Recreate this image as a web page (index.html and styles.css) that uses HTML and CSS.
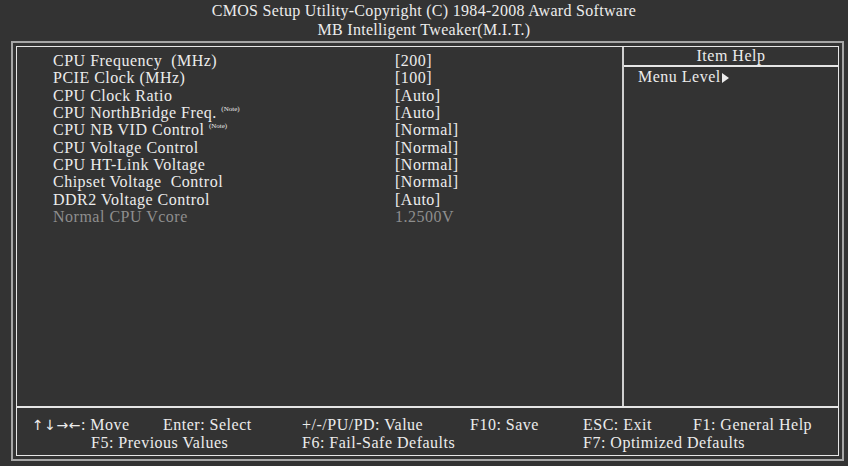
FILE: index.html
```
<!DOCTYPE html>
<html lang="en">
<head>
  <meta charset="UTF-8">
  <title>MB Intelligent Tweaker(M.I.T.)</title>
  <link rel="stylesheet" href="styles.css">
</head>
<body>
  <div class="title">
    <div>CMOS Setup Utility-Copyright (C) 1984-2008 Award Software</div>
    <div>MB Intelligent Tweaker(M.I.T.)</div>
  </div>

  <div class="outer">
    <div class="inner">
      <div class="main">
        <div class="items">
          <div class="row"><span class="name">CPU Frequency&nbsp; (MHz)</span><span class="value">[200]</span></div>
          <div class="row"><span class="name">PCIE Clock (MHz)</span><span class="value">[100]</span></div>
          <div class="row"><span class="name">CPU Clock Ratio</span><span class="value">[Auto]</span></div>
          <div class="row"><span class="name">CPU NorthBridge Freq. <sup class="note">(Note)</sup></span><span class="value">[Auto]</span></div>
          <div class="row"><span class="name">CPU NB VID Control <sup class="note">(Note)</sup></span><span class="value">[Normal]</span></div>
          <div class="row"><span class="name">CPU Voltage Control</span><span class="value">[Normal]</span></div>
          <div class="row"><span class="name">CPU HT-Link Voltage</span><span class="value">[Normal]</span></div>
          <div class="row"><span class="name">Chipset Voltage&nbsp; Control</span><span class="value">[Normal]</span></div>
          <div class="row"><span class="name">DDR2 Voltage Control</span><span class="value">[Auto]</span></div>
          <div class="row disabled"><span class="name">Normal CPU Vcore</span><span class="value">1.2500V</span></div>
        </div>
        <div class="help">
          <div class="help-title">Item Help</div>
          <div class="help-body">Menu Level<svg class="arrow" width="7" height="10" viewBox="0 0 7 10"><path d="M0 0 L7 5 L0 10 Z" fill="#ececec"/></svg></div>
        </div>
      </div>
      <div class="footer">
        <span class="r1 c1"><span class="arrows">&uarr;&darr;&rarr;&larr;</span>: Move</span>
        <span class="r1 c3">Enter: Select</span>
        <span class="r1 c4">+/-/PU/PD: Value</span>
        <span class="r1 c5">F10: Save</span>
        <span class="r1 c6">ESC: Exit</span>
        <span class="r1 c7">F1: General Help</span>
        <span class="r2 c2">F5: Previous Values</span>
        <span class="r2 c4">F6: Fail-Safe Defaults</span>
        <span class="r2 c6">F7: Optimized Defaults</span>
      </div>
    </div>
  </div>
</body>
</html>
```

FILE: styles.css
```
body {
  margin: 0;
  background-color: #333333;
  color: #ececec;
  font-family: "Liberation Serif", "Times New Roman", serif;
  font-size: 16px;
  letter-spacing: 0.5px;
}

.title {
  height: 41px;
  padding-top: 1px;
  box-sizing: border-box;
  text-align: center;
  line-height: 19px;
  letter-spacing: 0.3px;
}

.outer {
  margin: 0 4px 0 11px;
  height: 420px;
  box-sizing: border-box;
  border: 2px solid #a6a6a6;
  padding: 3px;
}

.inner {
  height: 100%;
  box-sizing: border-box;
  border: 1px solid #e6e6e6;
  display: flex;
  flex-direction: column;
}

.main {
  flex: 1;
  display: flex;
  border-bottom: 2px solid #e6e6e6;
}

.items {
  width: 607px;
  padding: 5px 0 0 36px;
  box-sizing: border-box;
  border-right: 2px solid #d0d0d0;
  line-height: 17.35px;
}

.row {
  display: flex;
}

.name {
  width: 342px;
}

.disabled {
  color: #8e8e8e;
}

.note {
  font-size: 7px;
  letter-spacing: 0;
  vertical-align: top;
  line-height: 10px;
}

.help {
  flex: 1;
}

.help-title {
  text-align: center;
  height: 18px;
  line-height: 18px;
  border-bottom: 2px solid #e6e6e6;
}

.help-body {
  padding: 1px 0 0 14px;
  line-height: 18px;
}

.arrow {
  margin-left: 1px;
  vertical-align: -1px;
}

.footer {
  height: 47px;
  box-sizing: border-box;
  padding: 8px 0 0 15px;
  display: grid;
  grid-template-columns: 59px 72px 139px 168px 113px 110px 1fr;
  grid-template-rows: 18px 18px;
  line-height: 18px;
  white-space: nowrap;
}

.arrows {
  font-family: "DejaVu Sans", sans-serif;
  font-size: 14px;
  letter-spacing: 0.5px;
}

.r1 { grid-row: 1; }
.r2 { grid-row: 2; }
.c1 { grid-column: 1 / 3; }
.c2 { grid-column: 2 / 4; }
.c3 { grid-column: 3; }
.c4 { grid-column: 4; }
.c5 { grid-column: 5; }
.c6 { grid-column: 6; }
.c7 { grid-column: 7; }
```
